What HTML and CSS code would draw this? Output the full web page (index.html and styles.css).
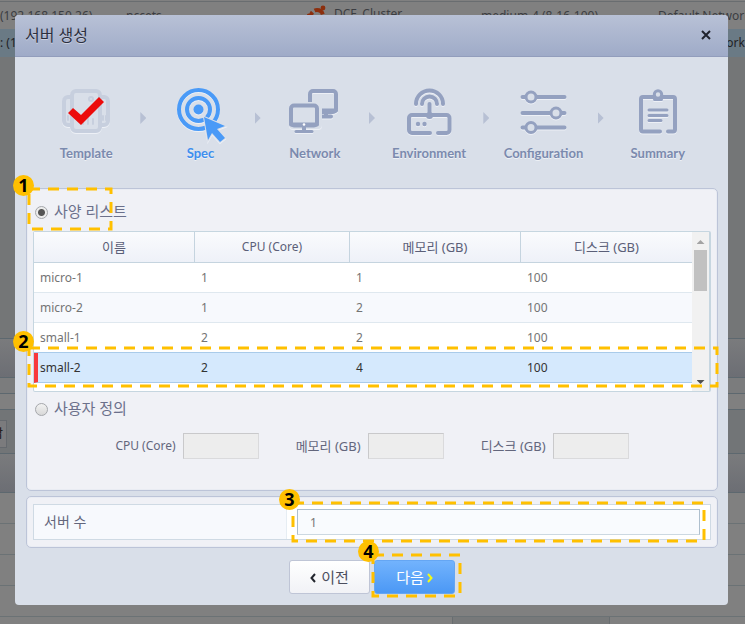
FILE: index.html
```html
<!DOCTYPE html>
<html lang="ko">
<head>
<meta charset="utf-8">
<meta name="viewport" content="width=device-width, initial-scale=1">
<title>서버 생성</title>
<link rel="stylesheet" href="styles.css">
</head>
<body>
<div class="backdrop" aria-hidden="true">
  <div class="bg-row bg-first">
    <span class="bg-host">(192.168.150.26)</span>
    <span class="bg-user">nccets</span>
    <span class="bg-cluster"><svg class="distro" viewBox="0 0 20 20"><circle cx="10" cy="11" r="6" fill="none" stroke="#8c2f0e" stroke-width="4" stroke-dasharray="10 2.5"/><circle cx="16" cy="3" r="2.4" fill="#8c2f0e"/><circle cx="2" cy="11" r="2.4" fill="#8c2f0e"/></svg>DCE_Cluster</span>
    <span class="bg-size">medium-4 (8-16-100)</span>
    <span class="bg-net">Default Network</span>
  </div>
  <div class="bg-row bg-selected"><span class="bg-host">: (1</span><span class="bg-net">Default Network</span></div>
  <div class="bg-empty"></div>
  <div class="bg-head"></div>
  <div class="bg-gap"></div>
  <div class="bg-line"></div>
  <div class="bg-tabs"><span>남</span></div>
  <div class="bg-head"></div>
  <div class="bg-cell"></div>
  <div class="bg-cell"></div>
  <div class="bg-cell"></div>
  <div class="bg-cell"></div>
  <div class="bg-split"><i></i><i></i><i></i></div>
</div>

<main class="dialog" role="dialog" aria-labelledby="dialog-title">
  <header class="titlebar">
    <h1 id="dialog-title">서버 생성</h1>
    <button class="close" type="button" aria-label="닫기"><svg viewBox="0 0 10 10"><path d="M1 1l8 8M9 1L1 9"/></svg></button>
  </header>

  <ol class="steps">
    <li class="step">
      <svg class="icon" viewBox="0 0 50 50">
        <g class="faded">
          <rect x="3" y="10" width="44" height="28" rx="4"/>
          <rect x="11" y="4" width="28" height="40" rx="4"/>
          <path d="M7 29v4M42 29v4M45 29v4M22 37v-6M27 37v-9M32 37v-5"/>
          <circle cx="30" cy="12" r="1"/>
        </g>
        <path class="check" d="M7 26l5-5 8 7L38 10l5 5-23 23z"/>
      </svg>
      <span>Template</span>
    </li>
    <li class="sep"></li>
    <li class="step current">
      <svg class="icon target" viewBox="0 0 50 50">
        <circle cx="23.500" cy="22.500" r="19.500"/>
        <circle cx="23.500" cy="22.500" r="11.500"/>
        <circle class="solid" cx="23.500" cy="22.500" r="5"/>
        <path class="pointer" d="M29 30l21 9-8 3 8 9-5 4-8-9-4 7z"/>
      </svg>
      <span>Spec</span>
    </li>
    <li class="sep"></li>
    <li class="step">
      <svg class="icon" viewBox="0 0 50 50">
        <rect x="20" y="4" width="26" height="21" rx="3"/>
        <path d="M31 29.500h10M36 25v4M20 23.500h26"/>
        <rect class="cut" x="-1" y="15" width="33" height="27" rx="4"/>
        <rect class="screen" x="1" y="18.500" width="26" height="20" rx="3"/>
        <path d="M1 37.500h26M14 39v5"/>
        <path class="thin" d="M6 44.500h16"/>
        <circle class="dot" cx="14" cy="37.500" r="1.300"/>
      </svg>
      <span>Network</span>
    </li>
    <li class="sep"></li>
    <li class="step">
      <svg class="icon" viewBox="0 0 50 50">
        <path d="M12 17a13.500 13.500 0 0 1 27 0M18 17a7.500 7.500 0 0 1 15 0M25.500 17v12"/>
        <path d="M26 46H8a3 3 0 0 1-3-3V31a3 3 0 0 1 3-3h34.500a3 3 0 0 1 3 3v12a3 3 0 0 1-3 3H34"/>
        <circle class="solid" cx="25.500" cy="28.500" r="3.500"/>
        <circle class="solid" cx="14" cy="37" r="2.200"/>
        <circle class="solid" cx="20.500" cy="37" r="2.200"/>
      </svg>
      <span>Environment</span>
    </li>
    <li class="sep"></li>
    <li class="step">
      <svg class="icon" viewBox="0 0 50 50">
        <path d="M4.500 10h42M4.500 26h42M4.500 40.500h42"/>
        <circle class="knob thin" cx="13" cy="10" r="5"/>
        <circle class="knob thin" cx="38" cy="26" r="5"/>
        <circle class="knob thin" cx="13" cy="40.500" r="5"/>
      </svg>
      <span>Configuration</span>
    </li>
    <li class="sep"></li>
    <li class="step">
      <svg class="icon" viewBox="0 0 50 50">
        <path d="M27 44.500H10a2 2 0 0 1-2-2V12a2 2 0 0 1 2-2h30a2 2 0 0 1 2 2v30.500a2 2 0 0 1-2 2h-5"/>
        <circle class="knob thin" cx="25" cy="7.500" r="3.700"/>
        <path class="thin" d="M21.500 12.500h7M16 23h18M16 28.500h18M16 33.500h12"/>
      </svg>
      <span>Summary</span>
    </li>
  </ol>

  <form class="content">
    <section class="panel spec">
      <div class="choice">
        <label><input type="radio" name="spec" checked>사양 리스트</label>
        <svg class="mark mark-choice"><rect width="100%" height="100%"/></svg>
        <b class="badge badge-choice">1</b>
      </div>
      <div class="grid">
        <div class="grid-view">
          <table>
            <thead>
              <tr><th class="c-name">이름</th><th class="c-cpu latin">CPU (Core)</th><th class="c-mem">메모리 (GB)</th><th>디스크 (GB)</th></tr>
            </thead>
            <tbody>
              <tr><td>micro-1</td><td>1</td><td>1</td><td>100</td></tr>
              <tr><td>micro-2</td><td>1</td><td>2</td><td>100</td></tr>
              <tr><td>small-1</td><td>2</td><td>2</td><td>100</td></tr>
              <tr class="selected"><td>small-2</td><td>2</td><td>4</td><td>100</td></tr>
            </tbody>
          </table>
          <div class="scroll" aria-hidden="true"><i class="up"></i><i class="thumb"></i><i class="down"></i></div>
        </div>
        <svg class="mark mark-row"><rect width="100%" height="100%"/></svg>
        <b class="badge badge-row">2</b>
      </div>
      <div class="choice custom">
        <label><input type="radio" name="spec">사용자 정의</label>
      </div>
      <div class="fields">
        <label class="latin">CPU (Core)<input type="text" disabled></label>
        <label>메모리 (GB)<input type="text" disabled></label>
        <label>디스크 (GB)<input type="text" disabled></label>
      </div>
    </section>

    <section class="panel count">
      <div class="count-row">
        <label for="count">서버 수</label>
        <div class="count-value">
          <input id="count" type="text" value="1">
          <svg class="mark mark-count"><rect width="100%" height="100%"/></svg>
          <b class="badge badge-count">3</b>
        </div>
      </div>
    </section>

    <footer class="actions">
      <button class="btn" type="button"><svg viewBox="0 0 6 10"><path d="M5 1L1.500 5 5 9"/></svg>이전</button>
      <div class="next">
        <button class="btn primary" type="button">다음<svg viewBox="0 0 6 10"><path d="M1 1l3.500 4L1 9"/></svg></button>
        <svg class="mark mark-next"><rect width="100%" height="100%"/></svg>
        <b class="badge badge-next">4</b>
      </div>
    </footer>
  </form>
</main>
</body>
</html>
```
FILE: styles.css
```css
* { box-sizing: border-box; }

body {
  margin: 0;
  padding: 15px 17px 19px 15px;
  min-height: 100vh;
  position: relative;
  background: #808080;
  color: #63667c;
  font: 13px/20px "Noto Sans", "Noto Sans CJK KR", sans-serif;
}

/* Dimmed page behind the dialog */
.backdrop {
  position: absolute;
  inset: 0;
  overflow: hidden;
  background: #808080;
  color: #3b3d42;
  font-size: 12px;
}
.bg-row { display: flex; height: 28px; line-height: 28px; white-space: nowrap; }
.bg-first { margin-top: 1px; border-top: 1px solid #696d70; }
.bg-host { flex: 0 0 126px; }
.bg-user { flex: 0 0 181px; }
.bg-cluster { display: flex; flex: 0 0 174px; line-height: 24px; }
.distro { width: 20px; height: 20px; margin: 3px 7px 0 0; }
.bg-size { flex: 0 0 177px; }
.bg-selected { justify-content: space-between; background: #6a7a85; color: #1f2226; }
.bg-selected .bg-net { flex: 0 0 87px; }
.bg-empty { height: 281px; background: #747677; }
.bg-head { height: 40px; border: solid #5d686f; border-width: 1px 0; background: linear-gradient(#7a7b7d, #6c6e74); }
.bg-gap { height: 15px; background: #7b7c7d; }
.bg-line { height: 17px; border: solid #5d686f; border-width: 1px 0; }
.bg-tabs { height: 43px; padding-top: 10px; background: #727577; color: #111; }
.bg-tabs span { display: block; width: 15px; height: 28px; line-height: 26px; margin-left: -8px; background: #7b7b7d; border: 1px solid #65696e; border-left: 0; }
.bg-cell { height: 31px; border-bottom: 1px solid #6b7275; }
.bg-split { display: flex; height: 12px; }
.bg-split i:nth-child(1) { flex: 0 0 452px; }
.bg-split i:nth-child(2) { flex: 0 0 158px; background: #77797a; border: solid #686d70; border-width: 0 1px; }

/* Dialog */
.dialog {
  position: relative;
  border-radius: 4px;
  background: #d9dfe9;
  padding-bottom: 11px;
}
.titlebar {
  display: flex;
  align-items: center;
  justify-content: space-between;
  height: 42px;
  padding: 0 17px 2px 10px;
  border-bottom: 1px solid #929dbc;
  border-radius: 4px 4px 0 0;
  background: linear-gradient(#b8c1d6, #9fabc8);
}
h1 { margin: 0; font-size: 16px; font-weight: 400; color: #2c2f3e; text-shadow: 0 1px #cbd1e0; }
.close { display: flex; padding: 0; border: 0; background: none; }
.close svg { width: 10px; height: 10px; stroke: #20232e; stroke-width: 2; }

/* Wizard steps */
.steps {
  display: flex;
  margin: 0;
  padding: 28px 16px 0 17px;
  height: 131px;
  list-style: none;
}
.step {
  display: flex;
  flex: 1 1 0;
  flex-direction: column;
  align-items: center;
  min-width: 0;
  color: #7b8aae;
  font: 700 13px/20px Lato, "Noto Sans", sans-serif;
  text-shadow: 0 1px #eef1f6;
}
.step span { margin-top: 6px; }
.icon { flex: none; width: 50px; height: 50px; margin-top: 2px; overflow: visible; fill: none; stroke: #94a1c0; stroke-width: 4; stroke-linecap: round; filter: drop-shadow(0 1px 0 #edf0f6); }
.current { color: #3f8fee; }
.target { stroke: #4a9af7; }
.icon .solid { fill: #94a1c0; stroke: none; }
.icon.target .solid, .icon .pointer { fill: #4a9af7; stroke: none; }
.icon .pointer { stroke: #d9dfe9; stroke-width: 2; paint-order: stroke; }
.icon .cut { fill: #d9dfe9; stroke: none; }
.icon .knob { fill: #d9dfe9; }
.icon .thin { stroke-width: 3; }
.icon .dot { fill: #fff; stroke: none; }
.faded { stroke: #c7cfde; fill: #d9dfe9; }
.faded path { stroke-width: 2; }
.icon .check { fill: #ec0b0b; stroke: none; }
.sep {
  flex: 0 0 6px;
  height: 12px;
  margin-top: 27px;
  background: #b7c0d4;
  clip-path: polygon(0 0, 100% 50%, 0 100%);
}

/* Panels */
.content { padding: 0 10px 0 11px; }
.panel { border: 1px solid #bcc4d8; border-radius: 5px; background: #f0f1f6; box-shadow: inset 0 0 0 1px #e9ecf3; }
.spec { height: 303px; padding: 11px 6px 0; }
.count { margin-top: 5px; padding: 7px 6px; }

.choice { position: relative; height: 31px; padding: 1px 0 0 2px; }
.choice label { display: inline-flex; align-items: center; gap: 6px; font-size: 15px; color: #6b708b; }
.choice input {
  appearance: none;
  width: 13px;
  height: 13px;
  margin: 3px 0 0;
  border: 1px solid #a5a7ab;
  border-radius: 50%;
  background: linear-gradient(#f2f2f2, #d8d8d8);
}
.choice input:checked { background: radial-gradient(circle, #555 0 3px, #ececec 4px); }
.custom { height: 41px; padding-top: 6px; }

.grid { position: relative; }
.grid-view { display: flex; height: 161px; border: 1px solid #c6d6e0; border-width: 1px 2px 1px 1px; border-radius: 2px; background: #fff; }
table { flex: 1; height: 151px; border-collapse: separate; border-spacing: 0; table-layout: fixed; }
th { height: 31px; padding: 0; border: solid #c5d4df; border-width: 0 1px 1px 0; background: linear-gradient(#fafbfd, #eef1f8); font-weight: 400; color: #5b5f78; }
th:last-child { border-right: 0; }
.c-name { width: 161px; }
.c-cpu { width: 155px; }
.c-mem { width: 171px; }
.latin { font-size: 12px; }
td { height: 30px; padding: 0 6px; border-bottom: 1px solid #dfe8ef; font-size: 12px; color: #747474; }
tr:nth-child(even) td { background: #f7f9fd; }
tbody tr.selected td { border-bottom-color: #a9cbea; background: #d5e9fd; color: #333; box-shadow: 0 -1px #a9cbea; }
tbody tr.selected td:first-child { border-left: 4px solid #f8383c; padding-left: 2px; }
.scroll { display: flex; flex: 0 0 17px; flex-direction: column; align-items: center; padding: 8px 0 7px; background: #f1f1f1; }
.scroll .up, .scroll .down { width: 8px; height: 4px; background: #a3a3a3; clip-path: polygon(50% 0, 100% 100%, 0 100%); }
.scroll .down { margin-top: auto; background: #505050; clip-path: polygon(0 0, 100% 0, 50% 100%); }
.scroll .thumb { width: 13px; height: 41px; margin-top: 6px; background: #c1c1c1; }

.fields { display: flex; justify-content: center; gap: 37px; }
.fields label { display: flex; align-items: center; gap: 7px; white-space: nowrap; }
.fields input { width: 76px; height: 26px; padding: 0 6px; border: 1px solid #c9c9cb; border-right-color: #dadadc; border-bottom-color: #dadadc; background: #ededed; }

.count-row { display: flex; height: 36px; border: 1px solid #cfdae4; background: #fff; }
.count-row > label { flex: 0 0 253px; padding-left: 10px; border-right: 1px solid #e6edf3; background: #f7f9fd; font-size: 14px; line-height: 33px; }
.count-value { position: relative; flex: 1; padding: 4px 10px; }
.count-value input { width: 100%; height: 26px; padding: 0 12px; border: 1px solid #aebfce; border-bottom-color: #ccd8e1; background: #f9fbfe; color: #777; font: inherit; font-size: 12px; }

.actions { display: flex; justify-content: center; gap: 4px; padding-top: 12px; }
.btn {
  display: flex;
  align-items: center;
  justify-content: center;
  gap: 5px;
  width: 81px;
  height: 34px;
  padding: 0;
  border: 1px solid #bfc5d6;
  border-radius: 3px;
  background: linear-gradient(#fff, #f1f2f6);
  color: #4b4e5e;
  font: inherit;
  font-size: 15px;
}
.btn svg { width: 6px; height: 10px; margin-top: 2px; overflow: visible; fill: none; stroke: #22252d; stroke-width: 2; }
.primary { border-color: #65a6f3; background: linear-gradient(#72b3fd, #4b98f5); color: #fff; gap: 3px; }
.primary svg { stroke: #f2fa16; }
.next { position: relative; }

/* Numbered callouts laid over the form */
.mark { position: absolute; overflow: visible; fill: none; stroke: #ffc000; stroke-width: 3; stroke-dasharray: 11 8; pointer-events: none; }
.mark-choice { left: -4px; top: -11px; width: 82px; height: 40px; }
.mark-row { left: -4px; top: 117px; width: calc(100% + 10px); height: 38px; }
.mark-count { left: 6px; top: -2px; width: calc(100% - 12px); height: 38px; }
.mark-next { left: -1px; top: -5px; width: 87px; height: 41px; }
.badge {
  position: absolute;
  width: 21px;
  height: 21px;
  border-radius: 50%;
  background: #ffc000;
  color: #000;
  font: 700 18px/21px "Noto Sans", sans-serif;
  text-align: center;
}
.badge-choice { left: -20px; top: -25px; }
.badge-row { left: -20px; top: 100px; }
.badge-count { left: -8px; top: -16px; }
.badge-next { left: -16px; top: -19px; }
```
